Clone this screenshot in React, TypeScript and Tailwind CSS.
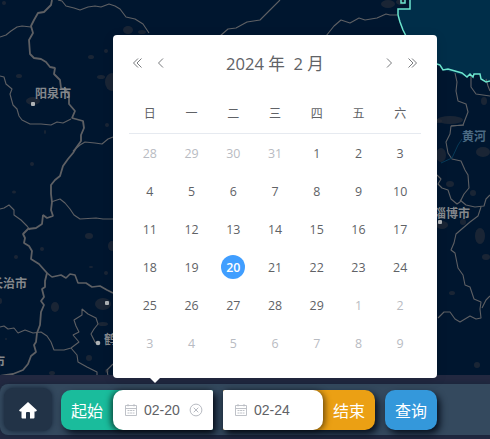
import React from "react";

const sans = "font-['Open_Sans','Noto_Sans_CJK_SC',sans-serif]";

const weekdays = ["日", "一", "二", "三", "四", "五", "六"];
const days = Array.from({ length: 42 }, (_, i) => {
  if (i < 4) return { n: 28 + i, muted: true };
  if (i < 33) return { n: i - 3, muted: false };
  return { n: i - 32, muted: true };
});

const smudges: [number, number, number, number][] = [
  [33, 101, 7, 4], [91, 57, 3, 2], [106, 51, 2, 2], [19, 76, 3, 2], [101, 77, 4, 2], [112, 82, 7, 9],
  [45, 132, 1, 2], [32, 164, 2, 2], [14, 192, 2, 1.5], [107, 125, 2, 2], [89, 236, 4, 3], [112, 246, 4, 5],
  [42, 249, 2, 2], [16, 257, 2, 2], [55, 307, 4, 5], [103, 304, 8, 6], [103, 324, 5, 2], [89, 358, 3, 3],
  [52, 373, 3, 2], [106, 273, 2, 2], [0, 301, 2, 3], [91, 267, 2, 1], [6, 339, 1, 1], [107, 371, 2, 2],
  [4, 3, 2, 2], [128, 30, 5, 4], [142, 32, 4, 2], [388, 4, 7, 4], [401, 2, 5, 3], [450, 120, 13, 4],
  [484, 101, 3, 4], [441, 155, 5, 7], [450, 184, 4, 3], [483, 152, 7, 5], [473, 193, 3, 3], [463, 222, 3, 3],
  [480, 236, 5, 8], [442, 225, 6, 4], [486, 257, 4, 3], [452, 293, 3, 2], [477, 365, 3, 3], [438, 121, 4, 2],
];

const border = [
  "M52 0L51 5 46 10 44 12 38 13 34 20 31 26 33 33 29 40 30 54 34 58 41 59 46 62 50 67 55 68 54 74 60 80 61 88 66 90 69 95 69 104 75 111 72 118 83 121 84 128 81 135 81 141 76 148 73 153 68 159 63 166 60 176 55 180 51 185 51 194 52 202 51 210 53 216 47 218 43 215 42 224 36 228 28 229 23 234 25 238 24 243 29 246 32 251 31 259 39 264 47 273 45 281 45 287 42 289 44 297 41 301 44 305 41 312 40 325 37 333 36 342 34 345 36 352 31 356 28 364 23 370 13 374 0 376",
];
const lines = [
  "M0 37L6 35 11 31 17 27 22 26 31 27",
  "M58 0L62 1 66 6 74 8 80 10 88 7 95 6 101 7 109 4 115 6 120 9 126 17 135 19 143 24 149 33",
  "M220 36L228 29 236 28 247 22 260 20 270 10 280 0",
  "M326 36L334 26 341 20 350 23 359 18 365 20 377 18 386 14 390 15 397 15",
  "M0 76L4 77 6 84 12 89 10 94 13 105 17 109 19 116 22 120 30 124 41 124 51 125 57 122 63 123 71 119",
  "M73 151L80 145 85 142 95 143 102 144 108 139 113 137",
  "M0 209L4 208 9 205 14 210 14 215 21 220 27 226 30 230",
  "M51 202L60 199 65 203 70 209 74 215 80 219 96 218 103 219 113 219",
  "M0 327L4 326 8 329 14 328 18 333 25 330 33 333 41 332 47 336 51 342 54 350 64 350 71 348 79 342 73 335 79 332 76 326 74 320 82 315 82 309 88 314 96 318 98 324 94 329 91 334 95 342 98 344",
  "M71 348L77 355 78 362 87 367 97 372 97 376",
  "M108 376L107 370 113 364",
  "M455 73L457 82 456 91 458 101 466 104 468 112 463 125 451 126",
  "M464 125L451 126 450 134 446 142 448 153 452 159 461 161 465 170 468 175 469 188 464 194 460 202 457 204 451 199 448 190 442 188 438 184 441 179 437 175",
  "M460 200L466 205 475 207 484 206 486 199 490 195",
  "M481 207L478 216 470 222 463 228 456 234 454 243 451 250 455 253 458 268 463 275 465 285 470 287 474 299 481 302 480 309 481 318 476 319 470 316 460 322 455 319 450 312 444 312 438 318",
  "M482 308L486 300 490 296",
  "M471 76L471 87 476 94 490 96",
  "M486 79L488 86 490 91",
];

function MapCanvas() {
  return (
    <svg className="absolute inset-0" width="490" height="439" viewBox="0 0 490 439" aria-hidden="true">
      <rect width="490" height="439" fill="#00162f" />
      <path d="M410 0H490V81L482 79 480 74 470 74 467 77 455 73 443 70 437 64 405 35 398 16V9H410Z" fill="#002e49" />
      {smudges.map(([x, y, rx, ry], i) => (
        <ellipse key={i} cx={x} cy={y} rx={rx} ry={ry} fill="#2b303b" opacity=".6" />
      ))}
      <g fill="none" stroke="#5e6064" strokeLinejoin="bevel">
        {border.map((d) => <path key={d} d={d} strokeWidth="1.8" />)}
        <path strokeWidth="1.6" d="M47 273L52 277 61 275 66 278 70 274 75 275 78 283 86 283 92 287 100 286 107 290 113 293" />
        {lines.map((d) => <path key={d} d={d} strokeWidth="1.1" />)}
      </g>
      <path d="M441 163L452 158 458 145 462 139" fill="none" stroke="#073a58" />
      <g fill="none" stroke="#6ce5ce" strokeWidth="1.5">
        <path d="M401 0V3H405V0M410 0V9H398V15L400 22 403 30 406 36" />
        <path d="M437 64L440 65 443 70 448 69 455 71 462 73 467 77 470 74 473 77 474 74 480 74 481 79 486 82 490 81" />
      </g>
      <g fill="#aeb2b5">
        <rect x="31" y="102" width="4" height="4" rx="1" />
        <rect x="105" y="301" width="4" height="4" rx="1" />
        <circle cx="98" cy="343" r="2.3" />
        <rect x="438" y="220" width="4" height="4" rx="1" />
      </g>
      <g className="font-['Noto_Sans_CJK_SC',sans-serif] text-[12px] font-bold" fill="#85888c">
        <text x="35" y="97.5">阳泉市</text>
        <text x="-9" y="287.5">长治市</text>
        <text x="-7" y="365.5">市</text>
        <text x="104" y="343.5">鹤壁市</text>
        <text x="434" y="217.5">淄博市</text>
        <text x="462" y="141" fill="#4c6b84">黄河</text>
      </g>
    </svg>
  );
}

function Chevron({ double, flip }: { double?: boolean; flip?: boolean }) {
  return (
    <svg width="12" height="12" viewBox="0 0 12 12" fill="none" stroke="#606266" strokeWidth=".85" className={flip ? "-scale-x-100" : ""}>
      {double ? <path d="M6 1.5L1.5 6 6 10.5M9.5 1.5L5 6 9.5 10.5" /> : <path d="M8 1.5L3.5 6 8 10.5" />}
    </svg>
  );
}

function CalendarIcon() {
  return (
    <svg width="14" height="14" viewBox="0 0 14 14" fill="none" stroke="#b8bbc2" className="shrink-0">
      <path d="M1.5 2.5H12.5V12.5H1.5ZM1.5 5.5H12.5M4 1V3.4M10 1V3.4" strokeWidth=".9" />
      <path d="M3.5 7.5H10.5M3.5 10H10.5" strokeDasharray="2 .6" strokeWidth=".9" />
    </svg>
  );
}

function DatePopup() {
  return (
    <div className={`absolute left-[113px] top-[35px] h-[343px] w-[324px] rounded-[4px] bg-white px-4 text-[#606266] shadow-[0_2px_12px_rgba(0,0,0,0.1)] ${sans}`}>
      <div className="flex h-[56px] items-center justify-between px-[3px]">
        <div className="flex gap-[11px]"><Chevron double /><Chevron /></div>
        <div className="whitespace-pre pt-px text-[16.6px] leading-6">2024 年  2 月</div>
        <div className="flex gap-[11px]"><Chevron flip /><Chevron double flip /></div>
      </div>
      <div className="grid h-[43px] grid-cols-7 border-b border-[#e6eaf0] pt-[4px]">
        {weekdays.map((d) => <div key={d} className="flex items-center justify-center text-[12px]">{d}</div>)}
      </div>
      <div className="grid grid-cols-7">
        {days.map(({ n, muted }, i) => (
          <div key={i} className="flex h-[38px] items-center justify-center text-[12.4px]">
            <span className={`flex size-6 items-center justify-center rounded-full pt-[2px] ${i === 23 ? "bg-[#409eff] font-semibold text-white" : muted ? "text-[#b8bbc2]" : ""}`}>{n}</span>
          </div>
        ))}
      </div>
      <div className="absolute left-[36px] top-[342px] h-0 w-0 border-x-[6px] border-t-[6px] border-x-transparent border-t-white" />
    </div>
  );
}

const inputClass = "flex w-[100px] items-center bg-white pl-[11px] font-['Liberation_Sans',sans-serif] text-[14px] text-[#606266]";

export default function App() {
  return (
    <main className="relative flex h-[439px] w-[490px] flex-col justify-end overflow-hidden">
      <MapCanvas />
      <footer className="relative h-[64px] bg-[#222840] pt-[9px]">
        <div className={`flex h-[51px] items-center rounded-l-[8px] bg-[#34495e] pl-1 text-[16px] text-white shadow-[0_0_4px_#17263a] ${sans}`}>
          <button className="flex h-[43px] w-12 items-center justify-center rounded-[9px] bg-[#223347] pt-px shadow-[0_0_5px_#142337]">
            <svg width="18" height="17" viewBox="0 0 18 17" fill="white"><path d="M9 0L18 8.2 17 9.5H15.5V15.5Q15.5 16.5 14.5 16.5H11V11Q11 10 10 10H8Q7 10 7 11V16.5H3.5Q2.5 16.5 2.5 15.5V9.5H1L0 8.2Z" /></svg>
          </button>
          <div className="ml-[9px] flex h-10 w-[152px] rounded-l-[10px] rounded-r-[2px] bg-[#1abc9c] shadow-[3px_4px_7px_#07101e]">
            <div className="flex w-[52px] items-center justify-center pt-[3px]">起始</div>
            <div className={`${inputClass} rounded-l-[10px] rounded-r-[2px] shadow-[-2px_1px_6px_rgba(0,0,0,0.65)]`}>
              <CalendarIcon /><span className="ml-[6px] pt-[2px]">02-20</span>
              <svg className="ml-[9px]" width="14" height="14" viewBox="0 0 14 14" fill="none" stroke="#b8bbc2"><circle cx="7" cy="7" r="5.9" /><path d="M4.7 4.7L9.3 9.3M9.3 4.7L4.7 9.3" /></svg>
            </div>
          </div>
          <div className="ml-[10px] flex h-10 w-[152px] rounded-l-[2px] rounded-r-[10px] bg-[#eba014] shadow-[3px_4px_7px_#07101e]">
            <div className={`${inputClass} rounded-l-[2px] rounded-r-[10px] shadow-[2px_1px_6px_rgba(0,0,0,0.55)]`}>
              <CalendarIcon /><span className="ml-[6px] pt-[2px]">02-24</span>
            </div>
            <div className="flex w-[52px] items-center justify-center pt-[3px]">结束</div>
          </div>
          <button className="ml-[10px] flex h-10 w-[52px] items-center justify-center rounded-[10px] bg-[#3498db] pt-[3px] shadow-[3px_4px_7px_#07101e]">查询</button>
        </div>
      </footer>
      <DatePopup />
    </main>
  );
}
